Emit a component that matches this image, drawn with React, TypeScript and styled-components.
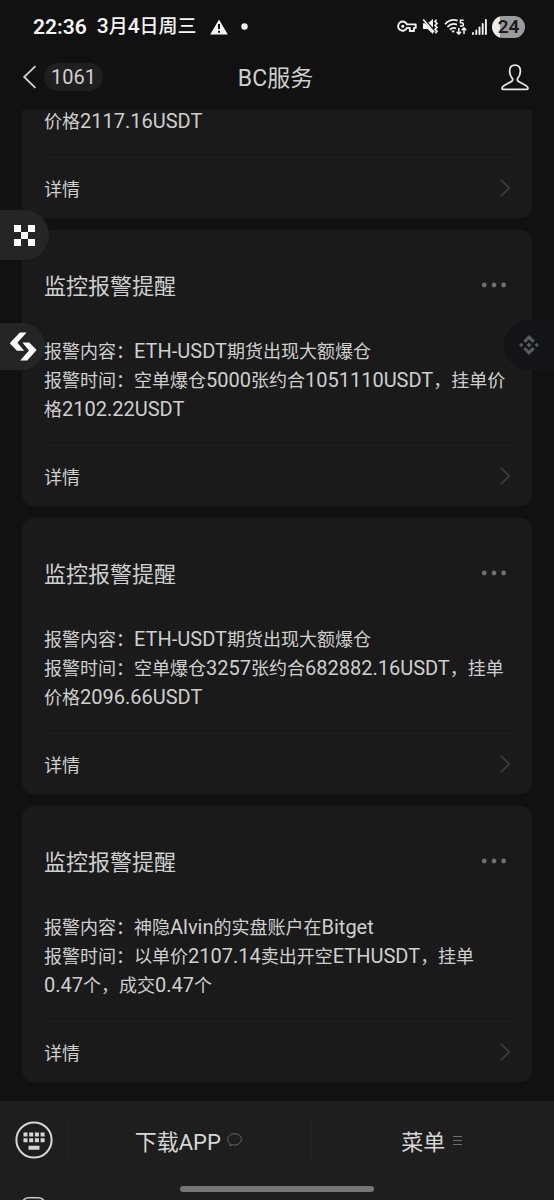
import React from 'react';
import styled, { createGlobalStyle } from 'styled-components';

const GlobalStyle = createGlobalStyle`
  *, *::before, *::after { box-sizing: border-box; }
  html, body { margin: 0; padding: 0; background: #111111; }
  body {
    font-family: Roboto, 'Noto Sans CJK SC', sans-serif;
    color: #cfcfcf;
  }
  h1, h2, p { margin: 0; font-weight: 400; }
  svg { display: block; flex: none; }
`;

const Screen = styled.div`
  position: relative;
  display: flex;
  flex-direction: column;
  height: 100vh;
  overflow: hidden;
  background: #111111;
`;

const StatusBar = styled.div`
  display: flex;
  flex: none;
  align-items: center;
  justify-content: space-between;
  height: 52px;
  padding: 1px 29px 0 33px;
  color: #f4f4f4;
`;

const StatusGroup = styled.div<{ $gap: number }>`
  display: flex;
  align-items: center;
  gap: ${(p) => p.$gap}px;
`;

const Clock = styled.time`
  font-size: 21px;
  font-weight: 600;
  line-height: 24px;
`;

const DateText = styled.span`
  font-size: 19px;
  font-weight: 500;
  line-height: 24px;
`;

const Latin = styled.span<{ $size: number }>`
  font-size: ${(p) => p.$size}px;
  line-height: 1;
`;

const Battery = styled.div`
  width: 33px;
  height: 22px;
  border-radius: 11px;
  background: linear-gradient(90deg, #ececec 24%, #9b9b9b 24%);
  color: #1b1b1b;
  font-size: 19px;
  font-weight: 600;
  line-height: 22px;
  text-align: center;
`;

const NavBar = styled.header`
  display: grid;
  flex: none;
  grid-template-columns: 1fr auto 1fr;
  align-items: center;
  height: 58px;
  padding: 0 25px 8px 22px;
`;

const IconButton = styled.button`
  display: flex;
  align-items: center;
  justify-content: center;
  padding: 0;
  border: 0;
  background: none;
  color: inherit;
  cursor: pointer;
`;

const BackButton = styled(IconButton)`
  justify-self: start;
  gap: 7px;
  color: #d2d2d2;
`;

const ProfileButton = styled(IconButton)`
  justify-self: end;
  color: #e6e6e6;
`;

const Unread = styled.span`
  padding: 0 7px;
  border-radius: 14px;
  background: #1f1f1f;
  font-family: Roboto, sans-serif;
  font-size: 20px;
  line-height: 28px;
`;

const NavTitle = styled.h1`
  padding-top: 4px;
  font-size: 23px;
  line-height: 30px;
`;

const Feed = styled.main`
  display: flex;
  flex: 1;
  flex-direction: column;
  justify-content: flex-end;
  gap: 12px;
  min-height: 0;
  padding: 0 22px 19px;
  overflow: hidden;
`;

const Card = styled.article`
  flex: none;
  padding: 42px 22px 0;
  border-radius: 12px;
  background: #1a1a1a;
`;

const CardHead = styled.div`
  display: flex;
  align-items: flex-start;
  justify-content: space-between;
  margin-bottom: 35px;
  padding-right: 3px;
`;

const CardTitle = styled.h2`
  font-size: 22px;
  line-height: 30px;
`;

const MoreButton = styled(IconButton)`
  height: 26px;
  color: #6e6e6e;
`;

const CardText = styled.p`
  font-size: 18px;
  line-height: 29px;
`;

const DetailLink = styled.a`
  display: flex;
  align-items: center;
  justify-content: space-between;
  height: 61px;
  margin-top: 21px;
  border-top: 1px solid #202020;
  color: inherit;
  font-size: 18px;
  text-decoration: none;
`;

const Bubble = styled.button<{ $top: number; $width: number; $height: number; $side: 'left' | 'right' }>`
  position: absolute;
  top: ${(p) => p.$top}px;
  ${(p) => p.$side}: 0;
  display: flex;
  align-items: center;
  justify-content: center;
  width: ${(p) => p.$width}px;
  height: ${(p) => p.$height}px;
  padding: 0;
  border: 0;
  border-radius: ${(p) => (p.$side === 'left' ? '0 25px 25px 0' : '25px 0 0 25px')};
  background: ${(p) => (p.$side === 'left' ? '#252525' : '#131417')};
  cursor: pointer;
`;

const BottomBar = styled.footer`
  flex: none;
  background: #1e1e1e;
`;

const MenuRow = styled.nav`
  display: flex;
  align-items: center;
  height: 78px;
`;

const KeyboardButton = styled(IconButton)`
  width: 67px;
  color: #d6d6d6;
`;

const MenuButton = styled(IconButton)<{ $gap: number }>`
  flex: 1;
  gap: ${(p) => p.$gap}px;
  height: 46px;
  padding-right: 2px;
  border-left: 1px solid #252525;
  color: #d6d6d6;
  font-family: inherit;
  font-size: 22px;
`;

const GestureArea = styled.div`
  position: relative;
  display: flex;
  justify-content: center;
  height: 21px;
  padding-top: 7px;
`;

const GestureBar = styled.div`
  width: 35%;
  height: 6px;
  border-radius: 3px;
  background: #757575;
`;

const Peek = styled.div`
  position: absolute;
  bottom: 0;
  left: 22px;
  color: #c8c8c8;
`;

const WarningIcon = () => (
  <svg width="18" height="16" viewBox="0 0 18 16">
    <path d="M9 .4 17.8 15.6H.2z" fill="currentColor" />
    <path d="M9 5v5M9 11.8v2" stroke="#111" strokeWidth="2" />
  </svg>
);

const BulletIcon = () => (
  <svg width="7" height="7" viewBox="0 0 7 7"><circle cx="3.5" cy="3.5" r="3.2" fill="currentColor" /></svg>
);

const KeyIcon = () => (
  <svg width="20" height="13" viewBox="0 0 20 13" fill="none" stroke="currentColor" strokeLinejoin="round">
    <path d="M10 4.4H18.7V7.9H17V11H12.8V7.9H10A4.6 4.6 0 1 1 10 4.4Z" strokeWidth="1.9" />
    <circle cx="5.8" cy="6.2" r="1.5" fill="currentColor" stroke="none" />
  </svg>
);

const MuteIcon = () => (
  <svg width="17" height="17" viewBox="0 0 17 17" fill="none" stroke="currentColor">
    <path d="M1 5.2H3.2L11 13V16L5.5 11H1ZM6.4 4.8 11 1V9.4Z" fill="currentColor" stroke="none" />
    <path d="M1.2 1.4 12.2 14.2" strokeWidth="1.6" />
    <path d="M14.6 1.8 13 3.4l2 2-2 2 2 2-2 2 2 2-1.6 1.8" strokeWidth="1.6" />
  </svg>
);

const WifiIcon = () => (
  <svg width="23" height="18" viewBox="0 0 23 18" fill="none" stroke="currentColor" strokeWidth="1.7">
    <path d="M1 6.2C4.6 2.2 9.6 1.2 13.6 2.6M3.4 9C6.2 6 9.8 5.4 13 6.6M5.8 11.6C7.8 9.8 10 9.6 12 10.4" />
    <path d="M7.2 12.6H11L9.1 15Z" fill="currentColor" stroke="none" />
    <path d="M19.6 2.2H16.4V4.8H17.6Q19.4 4.8 19.4 6.4T17.4 8H15.8" strokeWidth="1.5" />
    <path d="M14.8 10V16M12.6 13.8l2.2 2.4 2.2-2.4M20 16V10M17.8 12.2 20 9.8l2.2 2.4" strokeWidth="1.5" />
  </svg>
);

const SignalIcon = () => (
  <svg width="15" height="16" viewBox="0 0 15 16" stroke="currentColor" strokeWidth="1.9" strokeLinecap="round">
    <path d="M1 14v1M4.3 11.4V15M7.5 8.4V15M10.7 5V15M13.9 1V15" />
  </svg>
);

const BackIcon = () => (
  <svg width="15" height="24" viewBox="0 0 15 24" fill="none" stroke="currentColor" strokeWidth="1.8">
    <path d="M13.4 1.2 2.2 12 13.4 22.8" />
  </svg>
);

const ProfileIcon = () => (
  <svg width="28" height="27" viewBox="0 0 28 27" fill="none" stroke="currentColor" strokeWidth="1.8" strokeLinejoin="round">
    <path d="M14 1.2C10.3 1.2 8.6 3.9 8.6 7.2C8.6 10 9.7 12.400 11.200 14.3C12 15.400 11.700 16.800 10.400 17.5L3.200 21.500C1.700 22.400 1 23 1 24.200Q1 25.4 2.200 25.4H25.8Q27 25.4 27 24.2C27 23 26.300 22.400 24.800 21.500L17.600 17.500C16.300 16.800 16 15.400 16.800 14.300C18.300 12.400 19.400 10 19.400 7.2C19.400 3.9 17.7 1.2 14 1.2Z" />
  </svg>
);

const MoreIcon = () => (
  <svg width="26" height="6" viewBox="0 0 26 6" fill="currentColor">
    <circle cx="3.2" cy="3" r="2.4" />
    <circle cx="13" cy="3" r="2.4" />
    <circle cx="22.7" cy="3" r="2.4" />
  </svg>
);

const ChevronIcon = () => (
  <svg width="10" height="18" viewBox="0 0 10 18" fill="none" stroke="#3e3e3e" strokeWidth="1.7">
    <path d="M1 1 8.4 8.2Q9 9 8.4 9.8L1 17" />
  </svg>
);

const CheckerIcon = () => (
  <svg width="21" height="21" viewBox="0 0 3 3" fill="#fff" shapeRendering="crispEdges">
    <path d="M0 0h1v1H0zM2 0h1v1H2zM1 1h1v1H1zM0 2h1v1H0zM2 2h1v1H2z" />
  </svg>
);

const ArrowsIcon = () => (
  <svg width="28" height="29" viewBox="0 0 28 29" fill="#fff">
    <path d="M10.8 .4H17.6L8.4 10.800 15.200 18.800H8L1.400 12Q.8 11.200 1.400 10.400Z" />
    <path d="M18.200 28.400H11.200L20 18.400 13.400 10.400H20.200L27 17.200Q27.600 18 27 18.800Z" />
  </svg>
);

const DiamondIcon = () => (
  <svg width="20" height="20" viewBox="0 0 20 20" fill="#555a5f">
    <path d="M10 0 15.8 5.8 13.6 8 10 4.4 6.4 8 4.2 5.8ZM10 20 4.2 14.2 6.4 12 10 15.6 13.6 12 15.8 14.2ZM10 7.5 12.5 10 10 12.5 7.5 10ZM2.2 7.8 4.4 10 2.2 12.2 0 10ZM17.8 7.8 20 10 17.8 12.2 15.6 10Z" />
  </svg>
);

const KeyboardIcon = () => (
  <svg width="38" height="38" viewBox="0 0 38 38" fill="currentColor">
    <circle cx="19" cy="19" r="17.6" fill="none" stroke="currentColor" strokeWidth="2" />
    <path d="M8.5 11.5h4v4h-4zM14.2 11.5h4v4h-4zM19.9 11.5h4v4h-4zM25.6 11.5h4v4h-4zM8.5 17.2h4v4h-4zM14.2 17.2h4v4h-4zM19.9 17.2h4v4h-4zM25.6 17.2h4v4h-4zM13.5 24.8h11v4h-11z" />
  </svg>
);

const SpeechIcon = () => (
  <svg width="15" height="14" viewBox="0 0 15 14" fill="none" stroke="#696969" strokeWidth="1">
    <path d="M3.3 10.8C1.6 9.8 .7 8.2 .7 6.4C.7 3.2 3.7 .7 7.5 .7S14.3 3.2 14.3 6.4S11.3 12 7.5 12C6.7 12 6 11.9 5.3 11.7L2.8 12.8Z" />
  </svg>
);

const LinesIcon = () => (
  <svg width="9" height="9" viewBox="0 0 9 9" stroke="#6e6e6e" strokeWidth="1">
    <path d="M0 .5H9M0 4.5H9M0 8.5H9" />
  </svg>
);

const PeekIcon = () => (
  <svg width="23" height="3" viewBox="0 0 23 3" fill="none" stroke="currentColor" strokeWidth="1.6">
    <path d="M.8 4C2.4 1.600 4.400 .8 7 .8H16C18.600 .8 20.600 1.600 22.200 4" />
  </svg>
);

type Alert = { content: string; time: string };

const alerts: Alert[] = [
  {
    content: '报警内容：ETH-USDT期货出现大额爆仓',
    time: '报警时间：空单爆仓5000张约合1051110USDT，挂单价格2102.22USDT',
  },
  {
    content: '报警内容：ETH-USDT期货出现大额爆仓',
    time: '报警时间：空单爆仓3257张约合682882.16USDT，挂单价格2096.66USDT',
  },
  {
    content: '报警内容：神隐Alvin的实盘账户在Bitget',
    time: '报警时间：以单价2107.14卖出开空ETHUSDT，挂单0.47个，成交0.47个',
  },
];

/* Sets Latin letters and digits a little larger than the Chinese around them. */
const Mixed = ({ text, size }: { text: string; size: number }) => (
  <>
    {text.split(/([\w.-]+)/).map((run, i) =>
      i % 2 ? <Latin key={i} $size={size}>{run}</Latin> : run,
    )}
  </>
);

const Detail = () => (
  <DetailLink href="#detail">
    详情
    <ChevronIcon />
  </DetailLink>
);

const AlertCard = ({ content, time }: Alert) => (
  <Card>
    <CardHead>
      <CardTitle>监控报警提醒</CardTitle>
      <MoreButton aria-label="更多"><MoreIcon /></MoreButton>
    </CardHead>
    <CardText><Mixed text={content} size={20} /></CardText>
    <CardText><Mixed text={time} size={20} /></CardText>
    <Detail />
  </Card>
);

export default function App() {
  return (
    <>
      <GlobalStyle />
      <Screen>
        <StatusBar>
          <StatusGroup $gap={13}>
            <StatusGroup $gap={10}>
              <Clock>22:36</Clock>
              <DateText><Mixed text="3月4日周三" size={21} /></DateText>
            </StatusGroup>
            <WarningIcon />
            <BulletIcon />
          </StatusGroup>
          <StatusGroup $gap={5}>
            <KeyIcon />
            <MuteIcon />
            <WifiIcon />
            <SignalIcon />
            <Battery>24</Battery>
          </StatusGroup>
        </StatusBar>
        <NavBar>
          <BackButton aria-label="返回">
            <BackIcon />
            <Unread>1061</Unread>
          </BackButton>
          <NavTitle>BC服务</NavTitle>
          <ProfileButton aria-label="资料"><ProfileIcon /></ProfileButton>
        </NavBar>
        <Feed>
          <Card>
            <CardText><Mixed text="价格2117.16USDT" size={20} /></CardText>
            <Detail />
          </Card>
          {alerts.map((alert) => (
            <AlertCard key={alert.time} {...alert} />
          ))}
        </Feed>
        <BottomBar>
          <MenuRow>
            <KeyboardButton aria-label="键盘"><KeyboardIcon /></KeyboardButton>
            <MenuButton $gap={6}>下载APP<SpeechIcon /></MenuButton>
            <MenuButton $gap={8}>菜单<LinesIcon /></MenuButton>
          </MenuRow>
          <GestureArea>
            <GestureBar />
            <Peek><PeekIcon /></Peek>
          </GestureArea>
        </BottomBar>
        <Bubble $side="left" $top={210} $width={49} $height={50} aria-label="OKX"><CheckerIcon /></Bubble>
        <Bubble $side="left" $top={323} $width={45} $height={47} aria-label="Bitget"><ArrowsIcon /></Bubble>
        <Bubble $side="right" $top={320} $width={50} $height={50} aria-label="Binance"><DiamondIcon /></Bubble>
      </Screen>
    </>
  );
}
